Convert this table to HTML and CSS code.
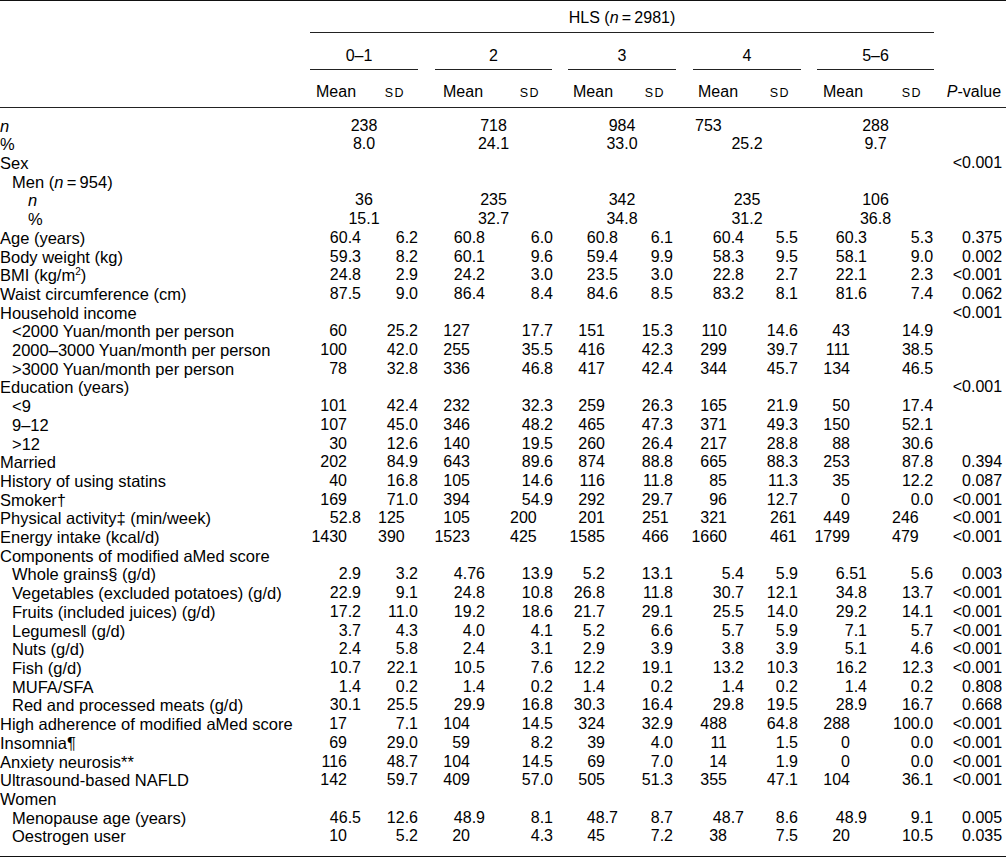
FILE: index.html
```html
<!DOCTYPE html>
<html lang="en">
<head>
<meta charset="utf-8">
<title>HLS table</title>
<link rel="stylesheet" href="styles.css">
</head>
<body>
<table class="t">
<colgroup>
<col class="w-lab"><col class="w-1m"><col class="w-1s"><col class="w-2m"><col class="w-2s"><col class="w-3m"><col class="w-3s"><col class="w-4m"><col class="w-4s"><col class="w-5m"><col class="w-5s"><col class="w-p">
</colgroup>
<thead>
<tr class="h1"><th></th><th colspan="10" class="hls">HLS (<i>n</i>&#8201;=&#8201;2981)</th><th></th></tr>
<tr class="h2 grp"><th></th><th colspan="2"><div>0–1</div></th><th colspan="2"><div>2</div></th><th colspan="2"><div>3</div></th><th colspan="2"><div>4</div></th><th colspan="2"><div>5–6</div></th><th></th></tr>
<tr class="h3"><th></th><th class="mean">Mean</th><th class="sd"><span class="sc">SD</span></th><th class="mean">Mean</th><th class="sd"><span class="sc">SD</span></th><th class="mean">Mean</th><th class="sd"><span class="sc">SD</span></th><th class="mean">Mean</th><th class="sd"><span class="sc">SD</span></th><th class="mean">Mean</th><th class="sd"><span class="sc">SD</span></th><th class="pv"><i>P</i>-value</th></tr>
</thead>
<tbody>
<tr class="grp first"><td class="lab"><i>n</i></td><td colspan="2">238</td><td colspan="2">718</td><td colspan="2">984</td><td colspan="2" class="left">753</td><td colspan="2">288</td><td></td></tr>
<tr class="grp"><td class="lab">%</td><td colspan="2">8.0</td><td colspan="2">24.1</td><td colspan="2">33.0</td><td colspan="2">25.2</td><td colspan="2">9.7</td><td></td></tr>
<tr><td class="lab">Sex</td><td></td><td></td><td></td><td></td><td></td><td></td><td></td><td></td><td></td><td></td><td class="p">&lt;0.001</td></tr>
<tr><td class="lab i1">Men (<i>n</i>&#8201;=&#8201;954)</td><td></td><td></td><td></td><td></td><td></td><td></td><td></td><td></td><td></td><td></td><td></td></tr>
<tr class="grp"><td class="lab i2"><i>n</i></td><td colspan="2">36</td><td colspan="2">235</td><td colspan="2">342</td><td colspan="2">235</td><td colspan="2">106</td><td></td></tr>
<tr class="grp"><td class="lab i2">%</td><td colspan="2">15.1</td><td colspan="2">32.7</td><td colspan="2">34.8</td><td colspan="2">31.2</td><td colspan="2">36.8</td><td></td></tr>
<tr><td class="lab">Age (years)</td><td class="d">60.4</td><td class="d">6.2</td><td class="d">60.8</td><td class="d">6.0</td><td class="d">60.8</td><td class="d">6.1</td><td class="d">60.4</td><td class="d">5.5</td><td class="d">60.3</td><td class="d">5.3</td><td class="p">0.375</td></tr>
<tr><td class="lab">Body weight (kg)</td><td class="d">59.3</td><td class="d">8.2</td><td class="d">60.1</td><td class="d">9.6</td><td class="d">59.4</td><td class="d">9.9</td><td class="d">58.3</td><td class="d">9.5</td><td class="d">58.1</td><td class="d">9.0</td><td class="p">0.002</td></tr>
<tr><td class="lab">BMI (kg/m<sup>2</sup>)</td><td class="d">24.8</td><td class="d">2.9</td><td class="d">24.2</td><td class="d">3.0</td><td class="d">23.5</td><td class="d">3.0</td><td class="d">22.8</td><td class="d">2.7</td><td class="d">22.1</td><td class="d">2.3</td><td class="p">&lt;0.001</td></tr>
<tr><td class="lab">Waist circumference (cm)</td><td class="d">87.5</td><td class="d">9.0</td><td class="d">86.4</td><td class="d">8.4</td><td class="d">84.6</td><td class="d">8.5</td><td class="d">83.2</td><td class="d">8.1</td><td class="d">81.6</td><td class="d">7.4</td><td class="p">0.062</td></tr>
<tr><td class="lab">Household income</td><td></td><td></td><td></td><td></td><td></td><td></td><td></td><td></td><td></td><td></td><td class="p">&lt;0.001</td></tr>
<tr><td class="lab i1">&lt;2000 Yuan/month per person</td><td class="c">60</td><td class="d">25.2</td><td class="c">127</td><td class="d">17.7</td><td class="c">151</td><td class="d">15.3</td><td class="c">110</td><td class="d">14.6</td><td class="c">43</td><td class="d">14.9</td><td></td></tr>
<tr><td class="lab i1">2000–3000 Yuan/month per person</td><td class="c">100</td><td class="d">42.0</td><td class="c">255</td><td class="d">35.5</td><td class="c">416</td><td class="d">42.3</td><td class="c">299</td><td class="d">39.7</td><td class="c">111</td><td class="d">38.5</td><td></td></tr>
<tr><td class="lab i1">&gt;3000 Yuan/month per person</td><td class="c">78</td><td class="d">32.8</td><td class="c">336</td><td class="d">46.8</td><td class="c">417</td><td class="d">42.4</td><td class="c">344</td><td class="d">45.7</td><td class="c">134</td><td class="d">46.5</td><td></td></tr>
<tr><td class="lab">Education (years)</td><td></td><td></td><td></td><td></td><td></td><td></td><td></td><td></td><td></td><td></td><td class="p">&lt;0.001</td></tr>
<tr><td class="lab i1">&lt;9</td><td class="c">101</td><td class="d">42.4</td><td class="c">232</td><td class="d">32.3</td><td class="c">259</td><td class="d">26.3</td><td class="c">165</td><td class="d">21.9</td><td class="c">50</td><td class="d">17.4</td><td></td></tr>
<tr><td class="lab i1">9–12</td><td class="c">107</td><td class="d">45.0</td><td class="c">346</td><td class="d">48.2</td><td class="c">465</td><td class="d">47.3</td><td class="c">371</td><td class="d">49.3</td><td class="c">150</td><td class="d">52.1</td><td></td></tr>
<tr><td class="lab i1">&gt;12</td><td class="c">30</td><td class="d">12.6</td><td class="c">140</td><td class="d">19.5</td><td class="c">260</td><td class="d">26.4</td><td class="c">217</td><td class="d">28.8</td><td class="c">88</td><td class="d">30.6</td><td></td></tr>
<tr><td class="lab">Married</td><td class="c">202</td><td class="d">84.9</td><td class="c">643</td><td class="d">89.6</td><td class="c">874</td><td class="d">88.8</td><td class="c">665</td><td class="d">88.3</td><td class="c">253</td><td class="d">87.8</td><td class="p">0.394</td></tr>
<tr><td class="lab">History of using statins</td><td class="c">40</td><td class="d">16.8</td><td class="c">105</td><td class="d">14.6</td><td class="c">116</td><td class="d">11.8</td><td class="c">85</td><td class="d">11.3</td><td class="c">35</td><td class="d">12.2</td><td class="p">0.087</td></tr>
<tr><td class="lab">Smoker†</td><td class="c">169</td><td class="d">71.0</td><td class="c">394</td><td class="d">54.9</td><td class="c">292</td><td class="d">29.7</td><td class="c">96</td><td class="d">12.7</td><td class="c">0</td><td class="d">0.0</td><td class="p">&lt;0.001</td></tr>
<tr><td class="lab">Physical activity‡ (min/week)</td><td class="d">52.8</td><td class="l">125</td><td class="c">105</td><td class="l">200</td><td class="c">201</td><td class="l">251</td><td class="c">321</td><td class="l">261</td><td class="c">449</td><td class="l">246</td><td class="p">&lt;0.001</td></tr>
<tr><td class="lab">Energy intake (kcal/d)</td><td class="c">1430</td><td class="l">390</td><td class="c">1523</td><td class="l">425</td><td class="c">1585</td><td class="l">466</td><td class="c">1660</td><td class="l">461</td><td class="c">1799</td><td class="l">479</td><td class="p">&lt;0.001</td></tr>
<tr><td class="lab">Components of modified aMed score</td><td></td><td></td><td></td><td></td><td></td><td></td><td></td><td></td><td></td><td></td><td></td></tr>
<tr><td class="lab i1">Whole grains§ (g/d)</td><td class="d">2.9</td><td class="d">3.2</td><td class="d">4.76</td><td class="d">13.9</td><td class="c">5.2</td><td class="d">13.1</td><td class="d">5.4</td><td class="d">5.9</td><td class="d">6.51</td><td class="d">5.6</td><td class="p">0.003</td></tr>
<tr><td class="lab i1">Vegetables (excluded potatoes) (g/d)</td><td class="d">22.9</td><td class="d">9.1</td><td class="d">24.8</td><td class="d">10.8</td><td class="c">26.8</td><td class="d">11.8</td><td class="d">30.7</td><td class="d">12.1</td><td class="d">34.8</td><td class="d">13.7</td><td class="p">&lt;0.001</td></tr>
<tr><td class="lab i1">Fruits (included juices) (g/d)</td><td class="d">17.2</td><td class="d">11.0</td><td class="d">19.2</td><td class="d">18.6</td><td class="c">21.7</td><td class="d">29.1</td><td class="d">25.5</td><td class="d">14.0</td><td class="d">29.2</td><td class="d">14.1</td><td class="p">&lt;0.001</td></tr>
<tr><td class="lab i1">Legumes‖ (g/d)</td><td class="d">3.7</td><td class="d">4.3</td><td class="d">4.0</td><td class="d">4.1</td><td class="c">5.2</td><td class="d">6.6</td><td class="d">5.7</td><td class="d">5.9</td><td class="d">7.1</td><td class="d">5.7</td><td class="p">&lt;0.001</td></tr>
<tr><td class="lab i1">Nuts (g/d)</td><td class="d">2.4</td><td class="d">5.8</td><td class="d">2.4</td><td class="d">3.1</td><td class="c">2.9</td><td class="d">3.9</td><td class="d">3.8</td><td class="d">3.9</td><td class="d">5.1</td><td class="d">4.6</td><td class="p">&lt;0.001</td></tr>
<tr><td class="lab i1">Fish (g/d)</td><td class="d">10.7</td><td class="d">22.1</td><td class="d">10.5</td><td class="d">7.6</td><td class="c">12.2</td><td class="d">19.1</td><td class="d">13.2</td><td class="d">10.3</td><td class="d">16.2</td><td class="d">12.3</td><td class="p">&lt;0.001</td></tr>
<tr><td class="lab i1">MUFA/SFA</td><td class="d">1.4</td><td class="d">0.2</td><td class="d">1.4</td><td class="d">0.2</td><td class="c">1.4</td><td class="d">0.2</td><td class="d">1.4</td><td class="d">0.2</td><td class="d">1.4</td><td class="d">0.2</td><td class="p">0.808</td></tr>
<tr><td class="lab i1">Red and processed meats (g/d)</td><td class="d">30.1</td><td class="d">25.5</td><td class="d">29.9</td><td class="d">16.8</td><td class="c">30.3</td><td class="d">16.4</td><td class="d">29.8</td><td class="d">19.5</td><td class="d">28.9</td><td class="d">16.7</td><td class="p">0.668</td></tr>
<tr><td class="lab">High adherence of modified aMed score</td><td class="c">17</td><td class="d">7.1</td><td class="c">104</td><td class="d">14.5</td><td class="c">324</td><td class="d">32.9</td><td class="c">488</td><td class="d">64.8</td><td class="c">288</td><td class="d">100.0</td><td class="p">&lt;0.001</td></tr>
<tr><td class="lab">Insomnia¶</td><td class="c">69</td><td class="d">29.0</td><td class="c">59</td><td class="d">8.2</td><td class="c">39</td><td class="d">4.0</td><td class="c">11</td><td class="d">1.5</td><td class="c">0</td><td class="d">0.0</td><td class="p">&lt;0.001</td></tr>
<tr><td class="lab">Anxiety neurosis**</td><td class="c">116</td><td class="d">48.7</td><td class="c">104</td><td class="d">14.5</td><td class="c">69</td><td class="d">7.0</td><td class="c">14</td><td class="d">1.9</td><td class="c">0</td><td class="d">0.0</td><td class="p">&lt;0.001</td></tr>
<tr><td class="lab">Ultrasound-based NAFLD</td><td class="c">142</td><td class="d">59.7</td><td class="c">409</td><td class="d">57.0</td><td class="c">505</td><td class="d">51.3</td><td class="c">355</td><td class="d">47.1</td><td class="c">104</td><td class="d">36.1</td><td class="p">&lt;0.001</td></tr>
<tr><td class="lab">Women</td><td></td><td></td><td></td><td></td><td></td><td></td><td></td><td></td><td></td><td></td><td></td></tr>
<tr><td class="lab i1">Menopause age (years)</td><td class="d">46.5</td><td class="d">12.6</td><td class="d">48.9</td><td class="d">8.1</td><td class="d">48.7</td><td class="d">8.7</td><td class="d">48.7</td><td class="d">8.6</td><td class="d">48.9</td><td class="d">9.1</td><td class="p">0.005</td></tr>
<tr class="last"><td class="lab i1">Oestrogen user</td><td class="c">10</td><td class="d">5.2</td><td class="c">20</td><td class="d">4.3</td><td class="c">45</td><td class="d">7.2</td><td class="c">38</td><td class="d">7.5</td><td class="c">20</td><td class="d">10.5</td><td class="p">0.035</td></tr>
</tbody>
</table>
</body>
</html>
```

FILE: styles.css
```css
html, body {
  margin: 0;
  padding: 0;
  background: #fff;
}

body {
  font-family: "Liberation Sans", Arial, Helvetica, sans-serif;
  font-size: 16px;
  color: #000;
}

.t {
  width: 1006px;
  table-layout: fixed;
  border-collapse: separate;
  border-spacing: 0;
  border-top: 1px solid #111;
  border-bottom: 1px solid #111;
}

.t th,
.t td {
  padding: 0;
  font-weight: normal;
  line-height: 18.7px;
  white-space: nowrap;
  vertical-align: top;
  text-align: left;
}

.w-lab { width: 310px; }
.w-1m { width: 60px; }
.w-1s { width: 56px; }
.w-2m { width: 69px; }
.w-2s { width: 65px; }
.w-3m { width: 65px; }
.w-3s { width: 60px; }
.w-4m { width: 65px; }
.w-4s { width: 59px; }
.w-5m { width: 66px; }
.w-5s { width: 59px; }
.w-p { width: 72px; }

/* header */
.h1 th {
  padding-top: 8px;
  padding-bottom: 5.3px;
}

.h1 .hls {
  text-align: center;
  border-bottom: 1px solid #222;
  padding-bottom: 4.3px;
}

.h2 th {
  padding-top: 13.65px;
  text-align: center;
}

.h2 th div {
  padding-bottom: 3.65px;
  border-bottom: 1px solid #222;
}

.h2 th:nth-child(2) div { padding-right: 10px; }

.h3 th {
  padding-top: 12.65px;
  padding-bottom: 4.65px;
  border-bottom: 1px solid #222;
}

.h3 .mean { text-align: left; }
.h3 .sd { text-align: right; }
.h3 .pv { text-align: right; padding-right: 5px; }

.h3 th:nth-child(2) { padding-left: 6px; }
.h3 th:nth-child(3) { padding-right: 21px; }
.h3 th:nth-child(4) { padding-left: 17px; }
.h3 th:nth-child(5) { padding-right: 20px; }
.h3 th:nth-child(6) { padding-left: 13px; }
.h3 th:nth-child(7) { padding-right: 20px; }
.h3 th:nth-child(8) { padding-left: 13px; }
.h3 th:nth-child(9) { padding-right: 19px; }
.h3 th:nth-child(10) { padding-left: 14px; }
.h3 th:nth-child(11) { padding-right: 12px; }

.sc {
  font-size: 12.5px;
  letter-spacing: 1.5px;
}

/* group-spanning cells (header labels and merged n/% values) */
.grp > :nth-child(2) { padding-left: 0; padding-right: 8px; }
.grp > :nth-child(3) { padding-left: 9px; padding-right: 8px; }
.grp > :nth-child(4) { padding-left: 8px; padding-right: 9px; }
.grp > :nth-child(5) { padding-left: 8px; padding-right: 8px; }
.grp > :nth-child(6) { padding-left: 8px; padding-right: 0; }

tbody .grp td { text-align: center; }
tbody .grp td.lab { text-align: left; }
tbody .grp td.left { text-align: left; padding-left: 10px; }

/* body */
tbody tr.first td { padding-top: 8.65px; }
tbody tr.last td { padding-bottom: 9.6px; }

.lab {
  padding-left: 1px;
  font-size: 16.5px;
}
.lab.i1 { padding-left: 12px; }
.lab.i2 { padding-left: 28px; }

sup {
  font-size: 10px;
  line-height: 0;
  vertical-align: 6px;
}

td.d, td.c, td.p { text-align: right; }
td.l { text-align: left; }

td.p { padding-right: 4px; }

tbody td:nth-child(2).d { padding-right: 9px; }
tbody td:nth-child(2).c { padding-right: 23px; }
tbody td:nth-child(3).d { padding-right: 8px; }
tbody td:nth-child(3).l { padding-left: 8px; }
tbody td:nth-child(4).d { padding-right: 10px; }
tbody td:nth-child(4).c { padding-right: 25px; }
tbody td:nth-child(5).d { padding-right: 7px; }
tbody td:nth-child(5).l { padding-left: 15px; }
tbody td:nth-child(6).d { padding-right: 7px; }
tbody td:nth-child(6).c { padding-right: 20px; }
tbody td:nth-child(7).d { padding-right: 12px; }
tbody td:nth-child(7).l { padding-left: 17px; }
tbody td:nth-child(8).d { padding-right: 6px; }
tbody td:nth-child(8).c { padding-right: 23px; }
tbody td:nth-child(9).d { padding-right: 11px; }
tbody td:nth-child(9).l { padding-left: 20px; }
tbody td:nth-child(10).d { padding-right: 8px; }
tbody td:nth-child(10).c { padding-right: 25px; }
tbody td:nth-child(11).d { padding-right: 1px; }
tbody td:nth-child(11).l { padding-left: 17px; }
```
